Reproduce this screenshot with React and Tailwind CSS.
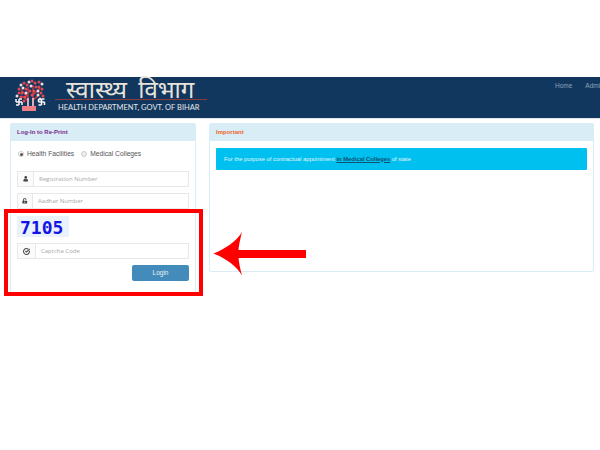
import React from 'react';
import { CircleCheckBig } from 'lucide-react';
import { FaUser, FaUnlockAlt } from 'react-icons/fa';

function Swastika({ x, y }) {
    return (
        <path
            d={`M${x} ${y + 3}h6M${x + 3} ${y}v6M${x} ${y}v3M${x + 6} ${y + 3}v3M${x + 3} ${y}h3M${x + 3} ${y + 6}h-3`}
            stroke="#f8f5f5"
            strokeWidth="1.500"
            fill="none"
        />
    );
}

function Logo() {
    const leaves = [
        [7, 6], [10, 4], [13, 6], [9, 9], [5, 10], [12, 10], [15, 3], [18, 2], [21, 4], [17, 7], [22, 8], [25, 3], [28, 5],
        [25, 8], [28, 10], [24, 12], [5, 14], [8, 14], [12, 14], [16, 12], [20, 12], [3, 17], [7, 18], [11, 18], [24, 16],
        [27, 14], [29, 17], [26, 20], [10, 22], [18, 16],
    ];
    return (
        <svg width="32" height="34" viewBox="0 0 32 34" className="shrink-0">
            <path d="M14 27V8M19 27V6M14 18L7 11M19 16L26 9M19 21L25 16M14 22L8 17" stroke="#d93a44" strokeWidth="1.300" fill="none" />
            <path d="M14 27V19M19 27V19" stroke="#f4d5d5" strokeWidth="1.500" fill="none" />
            {leaves.map(([x, y], i) => (
                <circle key={i} cx={x} cy={y} r="1.500" fill={i % 3 === 0 ? '#f6d9dc' : '#e5474f'} />
            ))}
            <Swastika x={2} y={20} />
            <Swastika x={24.500} y={20} />
            <rect x="8" y="27" width="14" height="5" fill="#ee7f84" />
        </svg>
    );
}

function Field({ icon, placeholder, className, iconWidth }) {
    return (
        <div className={`flex h-[16px] border border-[#e8e8e8] bg-white ${className}`}>
            <div className={`flex shrink-0 items-center justify-center border-r border-[#e8e8e8] bg-[#fbfbfb] text-[#444] ${iconWidth}`}>
                {icon}
            </div>
            <div className="flex items-center pl-[5px] font-['Open_Sans',sans-serif] text-[6px] text-[#a8a8a8]">{placeholder}</div>
        </div>
    );
}

export default function App() {
    return (
        <div className="relative h-[450px] w-[600px] overflow-hidden bg-white pt-[77px] font-['Liberation_Sans',Arial,sans-serif]">
            <header className="flex h-[42px] justify-between border-b border-[#e6e6e6] bg-[#11375f]">
                <div className="flex pl-[14px] pt-[2px]">
                    <Logo />
                    <div className="ml-[9px] flex w-[152px] flex-col">
                        <div className="h-[20px] whitespace-nowrap pl-[11px] font-['Noto_Sans','DejaVu_Sans',sans-serif] text-[24px] leading-[20px] text-[#e8e4dc] [word-spacing:5px]">
                            स्वास्थ्य विभाग
                        </div>
                        <div className="h-px bg-[#8c3a3c]" />
                        <div className="mt-[2px] whitespace-nowrap pl-[3px] font-['Lato',sans-serif] text-[7.500px] leading-[12px] text-[#e8e8e8]">
                            HEALTH DEPARTMENT, GOVT. OF BIHAR
                        </div>
                    </div>
                </div>
                <nav className="flex w-[45px] gap-[13px] overflow-hidden pt-[4px] text-[6.500px] leading-[9px] text-[#8fa3b8]">
                    <span>Home</span>
                    <span>Admin</span>
                </nav>
            </header>

            <main className="flex items-start pl-[10px] pt-[4px]">
                <section className="h-[171px] w-[186px] rounded-[2px] border border-[#d9edf7]">
                    <div className="flex h-[17px] items-center bg-[#d9edf7] pl-[6px] text-[6px] font-bold text-[#7a2a8c]">
                        Log-In to Re-Print
                    </div>
                    <div className="px-[6px]">
                        <div className="flex h-[25px] items-center pt-[1px] text-[6.700px] text-[#555]">
                            <span className="ml-[1px] flex h-[6px] w-[6px] items-center justify-center rounded-full border border-[#ccc]">
                                <span className="h-[3px] w-[3px] rounded-full bg-[#555]" />
                            </span>
                            <span className="ml-[3px]">Health Facilities</span>
                            <span className="ml-[7px] h-[6px] w-[6px] rounded-full border border-[#ccc] bg-[#eee]" />
                            <span className="ml-[3px]">Medical Colleges</span>
                        </div>
                        <Field className="mt-[5px]" iconWidth="w-[16px]" icon={<FaUser size={5.500} />} placeholder="Registration Number" />
                        <Field className="mt-[6px]" iconWidth="w-[15px]" icon={<FaUnlockAlt size={5.500} />} placeholder="Aadhar Number" />
                        <div className="mt-[7px] flex h-[21px] w-[52px] items-center bg-[#eaf2fc] pl-[3px] pt-[2px] font-['DejaVu_Sans_Mono','Liberation_Mono',monospace] text-[18px] font-bold text-[#1414e6]">
                            7105
                        </div>
                        <Field className="mt-[6px]" iconWidth="w-[18px]" icon={<CircleCheckBig size={7} strokeWidth={3.500} />} placeholder="Captcha Code" />
                        <div className="mt-[6px] flex justify-end">
                            <button className="h-[16px] w-[57px] rounded-[2px] bg-[#428bba] text-[6.500px] text-[#e8f0f6]">Login</button>
                        </div>
                    </div>
                </section>

                <section className="ml-[13px] h-[149px] w-[385px] rounded-[2px] border border-[#d9edf7]">
                    <div className="flex h-[17px] items-center bg-[#d9edf7] pl-[6px] text-[6px] font-bold text-[#f0642d]">
                        Important
                    </div>
                    <div className="mx-[6px] mt-[7px] flex h-[22px] items-center rounded-[1px] bg-[#00c0ef] pl-[8px] text-[5.800px] text-[#e4f7fc]">
                        <span>For the purpose of contractual appointment&nbsp;</span>
                        <span className="font-bold text-[#11506e] underline">in Medical Colleges</span>
                        <span>&nbsp;of state</span>
                    </div>
                </section>
            </main>

            {/* red callout drawn over the page */}
            <div className="absolute left-[4px] top-[209px] h-[87px] w-[199px] border-[4px] border-[#ff0000]" />
            <svg className="absolute left-[213px] top-[231px]" width="94" height="46" viewBox="0 0 94 46">
                <path d="M0.500 22.500C12 18 24 10 29 1C27 9 26 14 25.500 19H93V27H25.500C26 32 27 37 29 44.500C24 35 12 27 0.500 22.500Z" fill="#ff0000" />
            </svg>
        </div>
    );
}
